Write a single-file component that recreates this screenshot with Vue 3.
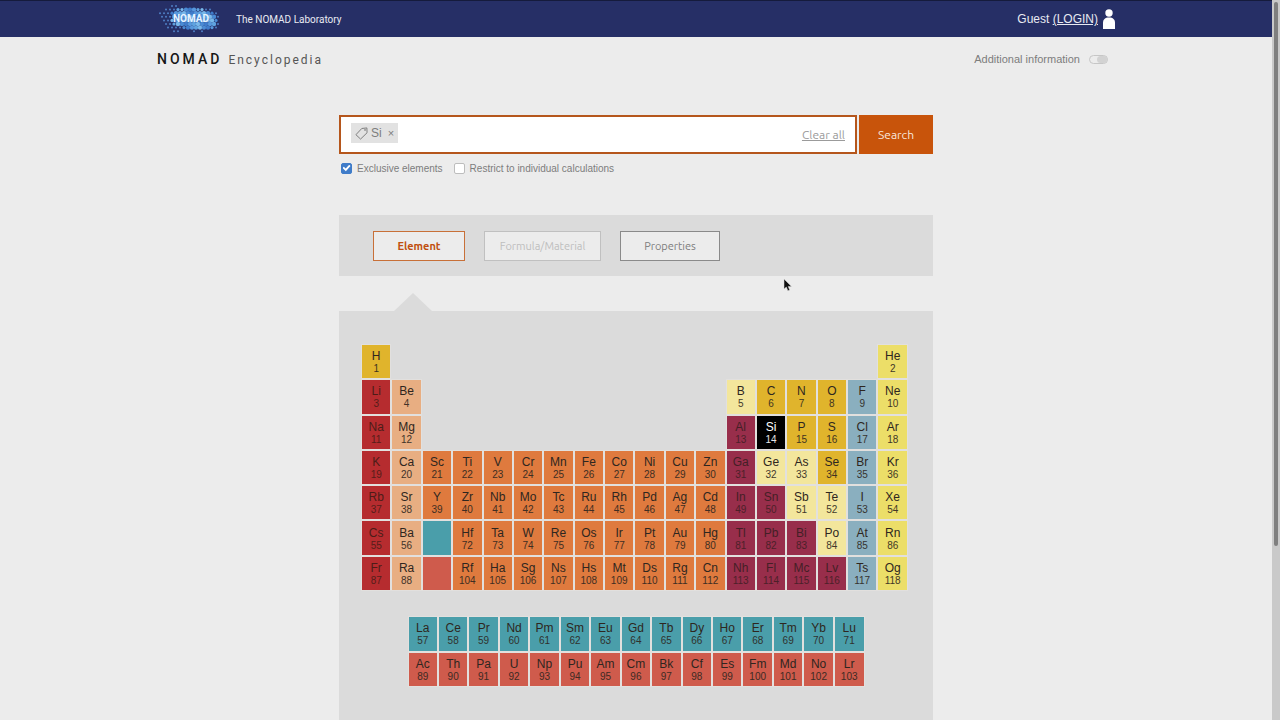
<script setup>
import { ref } from 'vue'

const exclusive = ref(true)
const restrict = ref(false)
const extraInfo = ref(false)
const query = ref('')
const tags = ref(['Si'])
const selected = 'Si'

const groups = {
  nonmetal: 'H C N O P S Se',
  alkali: 'Li Na K Rb Cs Fr',
  alkaline: 'Be Mg Ca Sr Ba Ra',
  metalloid: 'B Si Ge As Sb Te Po',
  halogen: 'F Cl Br I At Ts',
  noble: 'He Ne Ar Kr Xe Rn Og',
  poor: 'Al Ga In Sn Tl Pb Bi Nh Fl Mc Lv',
}
const kinds = {}
for (const [kind, list] of Object.entries(groups)) {
  for (const s of list.split(' ')) kinds[s] = kind
}

// "." is an empty place, "*" and "+" stand for the two separate series
const layout = [
  ['H . . . . . . . . . . . . . . . . He', 1],
  ['Li Be . . . . . . . . . . B C N O F Ne', 3],
  ['Na Mg . . . . . . . . . . Al Si P S Cl Ar', 11],
  ['K Ca Sc Ti V Cr Mn Fe Co Ni Cu Zn Ga Ge As Se Br Kr', 19],
  ['Rb Sr Y Zr Nb Mo Tc Ru Rh Pd Ag Cd In Sn Sb Te I Xe', 37],
  ['Cs Ba * Hf Ta W Re Os Ir Pt Au Hg Tl Pb Bi Po At Rn', 55],
  ['Fr Ra + Rf Ha Sg Ns Hs Mt Ds Rg Cn Nh Fl Mc Lv Ts Og', 87],
]
const rows = layout.map(([line, start]) => {
  let n = start
  return line.split(' ').map((s) => {
    if (s === '.') return { kind: 'empty' }
    if (s === '*' || s === '+') {
      n += 15
      return { kind: s === '*' ? 'lanthanide' : 'actinide' }
    }
    return { symbol: s, number: n++, kind: s === selected ? 'selected' : kinds[s] || 'transition' }
  })
})
const series = [
  ['La Ce Pr Nd Pm Sm Eu Gd Tb Dy Ho Er Tm Yb Lu', 57, 'lanthanide'],
  ['Ac Th Pa U Np Pu Am Cm Bk Cf Es Fm Md No Lr', 89, 'actinide'],
].map(([line, start, kind]) => line.split(' ').map((symbol, i) => ({ symbol, number: start + i, kind })))

// Halftone cloud of the logo: dots shrink away from the centre
const dots = []
const shades = ['#4a8bd4', '#5fa3e0', '#3f7cca', '#78b8ea', '#5798dd']
for (let r = 0; r < 8; r++) {
  for (let c = 0; c < 15; c++) {
    const x = 3 + c * 4 + (r % 2) * 2
    const y = 2 + r * 3.6
    const dx = Math.abs((x - 37) / 22)
    const dy = Math.abs((y - 15 - (x - 37) * 0.06) / 10)
    const d = dx ** 2.4 + dy ** 2.4
    const noise = ((r * 7 + c * 13) % 5) / 5
    const limit = x < 22 ? 2.6 : 1.4
    if (d > limit + noise * 0.5) continue
    dots.push({ x, y, r: d < 0.9 ? 2.2 : d < 1.2 ? 1.6 : 1, fill: d > 1.2 ? '#4f7fc4' : shades[(r * 3 + c * 2) % 5] })
  }
}
</script>

<template>
  <div class="page">
    <div class="content">
      <header class="topbar">
        <div class="wrap bar">
          <a class="brand" href="#">
            <svg class="logo" viewBox="0 0 64 30" role="img" aria-label="NOMAD">
              <circle v-for="(d, i) in dots" :key="i" :cx="d.x" :cy="d.y" :r="d.r" :fill="d.fill" />
              <text x="34" y="18" text-anchor="middle">NOMAD</text>
            </svg>
            <span>The NOMAD Laboratory</span>
          </a>
          <div class="user">
            <span>Guest <a href="#">(LOGIN)</a></span>
            <svg class="person" viewBox="0 0 12 20" aria-hidden="true">
              <circle cx="6" cy="4" r="3.7" />
              <path d="M0 20v-6c0-3.500 2-5.400 6-5.400s6 1.900 6 5.400v6z" />
            </svg>
          </div>
        </div>
      </header>

      <div class="wrap subbar">
        <h1><b>NOMAD</b><span>Encyclopedia</span></h1>
        <label class="info">
          Additional information
          <input v-model="extraInfo" class="switch" type="checkbox" />
        </label>
      </div>

      <main class="main">
        <form class="search" @submit.prevent>
          <div class="field">
            <span v-for="t in tags" :key="t" class="tag">
              <svg viewBox="0 0 14 14" aria-hidden="true">
                <path d="M1 8.300 7.300 1.600 12.800 1l.2 5.200L6 13z" />
                <circle cx="10.800" cy="3.200" r=".5" />
              </svg>
              {{ t }}
              <button type="button" aria-label="Remove" @click="tags = []">×</button>
            </span>
            <input v-model="query" type="text" aria-label="Search query" />
            <a class="clear" href="#" @click.prevent="tags = []">Clear all</a>
          </div>
          <button class="submit" type="submit">Search</button>
        </form>

        <div class="options">
          <label><input v-model="exclusive" type="checkbox" />Exclusive elements</label>
          <label><input v-model="restrict" type="checkbox" />Restrict to individual calculations</label>
        </div>

        <nav class="tabs">
          <button class="tab active" type="button">Element</button>
          <button class="tab" type="button" disabled>Formula/Material</button>
          <button class="tab" type="button">Properties</button>
        </nav>

        <div class="pointer"></div>
        <section class="panel">
          <table class="elements">
            <tbody>
              <tr v-for="(row, r) in rows" :key="r">
                <td v-for="(e, c) in row" :key="c" :class="e.kind">
                  <button v-if="e.symbol" type="button">{{ e.symbol }}<small>{{ e.number }}</small></button>
                </td>
              </tr>
            </tbody>
          </table>
          <table class="elements series">
            <tbody>
              <tr v-for="(row, r) in series" :key="r">
                <td v-for="e in row" :key="e.symbol" :class="e.kind">
                  <button type="button">{{ e.symbol }}<small>{{ e.number }}</small></button>
                </td>
              </tr>
            </tbody>
          </table>
        </section>
      </main>
    </div>

    <div class="scrollbar"><div class="thumb"></div></div>

    <svg class="cursor" viewBox="0 0 10 14" aria-hidden="true">
      <path d="M1 1v10l2.300-2 1.600 3.700 1.800-.8L5.200 8.400h3.300z" />
    </svg>
  </div>
</template>

<style>
body {
  background: #ececec;
}
</style>

<style scoped>
* {
  box-sizing: border-box;
}
.page {
  display: flex;
  height: 100vh;
  overflow: hidden;
  background: #ececec;
  color: #7d7d7d;
  font-family: "Liberation Sans", Arial, sans-serif;
}
.content {
  display: flex;
  flex-direction: column;
  flex: 1;
}
button,
input {
  font: inherit;
  margin: 0;
}
button {
  padding: 0;
  border: 0;
  background: none;
  color: inherit;
}
.wrap {
  display: flex;
  align-items: center;
  justify-content: space-between;
  width: 100%;
  max-width: 958px;
  margin: 0 auto;
}
.topbar {
  border-top: 1px solid #151b3c;
  background: #262f66;
}
.bar {
  height: 36px;
  color: #e8eaf2;
}
.brand {
  display: flex;
  align-items: center;
  gap: 15px;
  color: inherit;
  font-family: Roboto, sans-serif;
  font-size: 10px;
  text-decoration: none;
}
.logo {
  width: 64px;
  height: 30px;
}
.logo text {
  fill: #e6f4ff;
  font-family: Roboto, sans-serif;
  font-size: 10px;
  font-weight: 700;
}
.user {
  display: flex;
  align-items: center;
  gap: 5px;
  font-size: 12px;
}
.user a {
  color: inherit;
}
.person {
  width: 12px;
  height: 20px;
  fill: #fff;
}
.subbar {
  height: 44px;
}
h1 {
  display: flex;
  align-items: baseline;
  gap: 6px;
  margin: 0;
  color: #161616;
  font-family: Roboto, sans-serif;
  font-size: 14px;
  font-weight: 400;
}
h1 b {
  font-weight: 500;
  letter-spacing: 3px;
}
h1 span {
  color: #555;
  font-size: 12px;
  letter-spacing: 2px;
}
.info {
  display: flex;
  align-items: center;
  gap: 9px;
  padding-right: 7px;
  font-size: 11px;
}
.switch {
  appearance: none;
  display: flex;
  justify-content: flex-end;
  width: 19px;
  height: 9px;
  border: 1px solid #c6c6c6;
  border-radius: 5px;
}
.switch::after {
  content: "";
  width: 10px;
  border-radius: 4px;
  background: #d2d2d2;
}
.main {
  display: flex;
  flex-direction: column;
  flex: 1;
  width: 100%;
  max-width: 594px;
  margin: 34px auto 0;
}
.search {
  display: flex;
  gap: 2px;
  height: 39px;
}
.field {
  display: flex;
  flex: 1;
  align-items: center;
  padding: 0 10px;
  border: 2px solid #b5561c;
  background: #fff;
}
.tag {
  display: flex;
  align-items: center;
  align-self: flex-start;
  gap: 3px;
  height: 20px;
  margin-top: 6px;
  padding: 0 4px;
  background: #e2e2e2;
  font-size: 12px;
}
.tag svg {
  width: 13px;
  height: 13px;
  fill: none;
  stroke: #777;
  stroke-width: 1;
}
.tag button {
  padding-left: 3px;
  font-size: 11px;
}
.field input {
  flex: 1;
  min-width: 0;
  border: 0;
  outline: 0;
  background: none;
}
.clear,
.submit {
  font-family: Ubuntu, "Noto Sans", sans-serif;
  font-size: 12px;
}
.clear {
  color: #9b9b9b;
}
.submit {
  width: 74px;
  background: #c8540b;
  color: #f8e6dc;
}
.options {
  display: flex;
  gap: 11px;
  padding: 8px 2px;
  font-size: 10px;
}
.options label {
  display: flex;
  align-items: center;
  gap: 5px;
  height: 12px;
}
.options input {
  appearance: none;
  display: flex;
  align-items: center;
  justify-content: center;
  width: 11px;
  height: 11px;
  border: 1px solid #bdbdbd;
  border-radius: 2px;
  background: #fff;
}
.options input:checked {
  border-color: #3f7cc9;
  background: #3f7cc9;
}
.options input:checked::after {
  content: "";
  width: 8px;
  height: 7px;
  background: #fff;
  clip-path: polygon(0 50%, 16% 32%, 40% 58%, 84% 4%, 100% 22%, 42% 96%);
}
.tabs {
  display: flex;
  align-items: center;
  gap: 19px;
  height: 61px;
  margin-top: 33px;
  padding: 0 34px;
  background: #dbdbdb;
}
.tab {
  width: 100px;
  height: 30px;
  border: 1px solid #8a8a8a;
  background: #ececec;
  color: #7d7d7d;
  font-family: Ubuntu, "Noto Sans", sans-serif;
  font-size: 11px;
}
.tab.active {
  width: 92px;
  border-color: #c87038;
  color: #c05010;
  font-weight: 700;
}
.tab:disabled {
  width: 117px;
  border-color: #c0c0c0;
  color: #bebebe;
}
.pointer {
  width: 38px;
  height: 18px;
  margin: 17px 0 0 55px;
  background: #dbdbdb;
  clip-path: polygon(50% 0, 100% 100%, 0 100%);
}
.panel {
  display: flex;
  flex: 1;
  flex-direction: column;
  align-items: center;
  gap: 23px;
  padding: 32px 3px 0 0;
  background: #dbdbdb;
}
.elements {
  width: 549px;
  height: 249px;
  border-spacing: 2px;
  table-layout: fixed;
}
.series {
  width: 459px;
  height: 73px;
  margin-left: 3px;
}
td {
  padding: 0;
  color: #2e2620;
  font-size: 12px;
  outline: 1px solid rgba(240, 235, 228, 0.35);
}
td button {
  display: block;
  width: 100%;
  height: 33px;
  line-height: 14px;
}
small {
  display: block;
  font-size: 10px;
  line-height: 11px;
  opacity: 0.9;
}
.empty {
  outline: 0;
}
.nonmetal {
  background: #e0b42c;
}
.alkali {
  background: #b62c2f;
  color: #4c1c18;
}
.alkaline {
  background: #e8ae82;
}
.transition {
  background: #df7a3e;
}
.poor {
  background: #982e4b;
  color: #441f26;
}
.metalloid {
  background: #f3e69c;
}
.halogen {
  background: #8aafbf;
}
.noble {
  background: #ecde68;
}
.lanthanide {
  background: #4a9eaa;
}
.actinide {
  background: #cf5b4c;
}
.selected {
  background: #000;
  color: #fff;
}
.scrollbar {
  width: 8px;
  padding: 2px;
  background: #c9c9c9;
}
.thumb {
  height: 76%;
  border-radius: 2px;
  background: #7f7f7f;
}
.cursor {
  position: absolute;
  top: 278px;
  left: 783px;
  width: 10px;
  height: 14px;
  fill: #111;
  stroke: #ddd;
  stroke-width: 0.5;
}
</style>
